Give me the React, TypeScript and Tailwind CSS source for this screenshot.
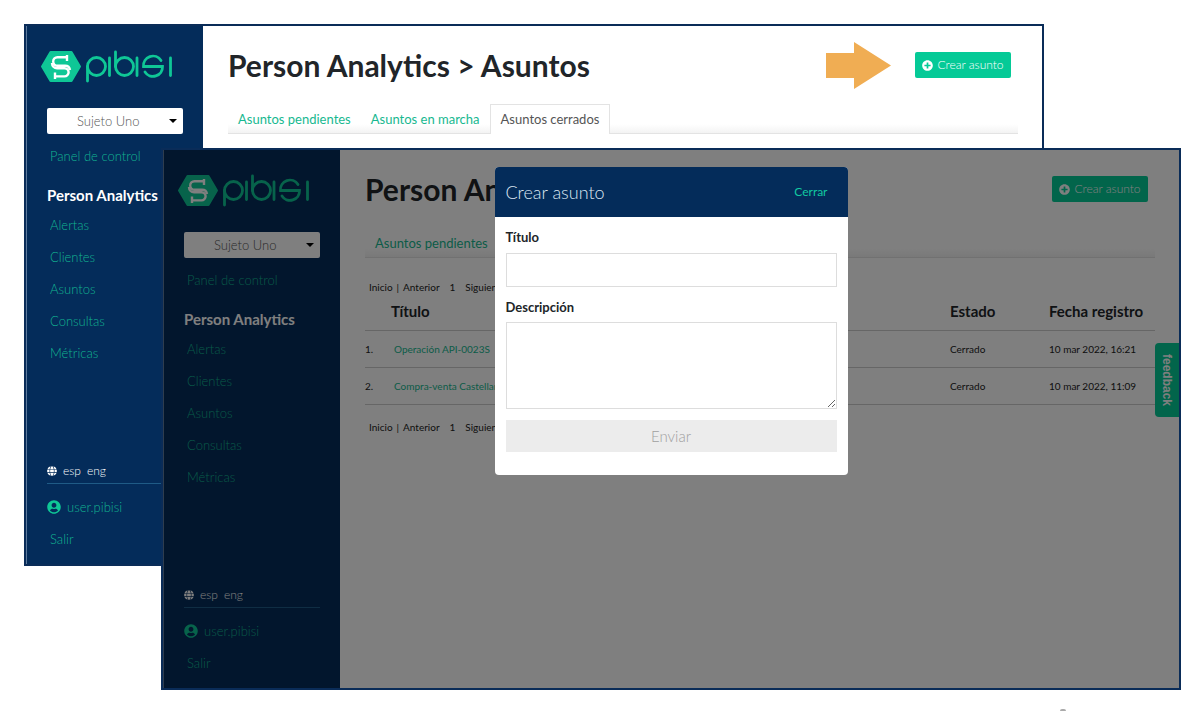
import { useId, type ReactNode } from "react";
import { FaGlobe, FaPlusCircle, FaUserCircle } from "react-icons/fa";

const sections = ["Alertas", "Clientes", "Asuntos", "Consultas", "Métricas"];
const tabs = ["Asuntos pendientes", "Asuntos en marcha", "Asuntos cerrados"];
const rows = [
  { title: "Operación API-0023S", status: "Cerrado", date: "10 mar 2022, 16:21" },
  { title: "Compra-venta Castellana", status: "Cerrado", date: "10 mar 2022, 11:09" },
];

const Logo = () => (
  <svg viewBox="0 0 134 34" className="block h-[34px] w-[134px]" fill="none" role="img" aria-label="pibisi">
    <path d="M2 17.5 10.5 3H31.5L40 17.5 31.5 32H10.5Z" fill="#0fc796" stroke="#0fc796" strokeWidth="2" strokeLinejoin="round" />
    <g stroke="#fff" strokeWidth="2.4">
      <path d="M27 6V12M27 8.2H17.5A4.3 4.3 0 0 0 17.500 16.800H25A5 5 0 0 1 30 21" />
      <path d="M12 14C12 17.500 14.500 19.200 17 19.200H24.500A4.100 4.100 0 0 1 24.500 27.400H15M15 23.500V30" />
    </g>
    <g stroke="#0fc796" strokeWidth="2.8" strokeLinecap="round">
      <circle cx="56.5" cy="17.5" r="9" />
      <path d="M47.5 17.5V32M69.5 9V26.5M75.5 3V17.5M97 9V26.5M130.5 9V26.5" />
      <circle cx="84.5" cy="17.5" r="9" />
      <path d="M121 11.5A9.5 9.5 0 0 0 103.5 17.5H122.5A9.5 9.5 0 0 1 105 23" />
    </g>
  </svg>
);

function Sidebar() {
  const id = useId();
  return (
    <aside className="flex w-[177px] shrink-0 flex-col border-l border-[#5d7a9c] bg-[#042c5a] pr-5 pl-5 text-[13px] leading-4 font-light text-[#12b391]">
      <a href="#inicio" className="mt-[23px] -ml-[7px]"><Logo /></a>
      <div className="relative mt-[25px]">
        <select id={id} aria-label="Sujeto" className="h-[26px] w-full appearance-none rounded-xs bg-white pl-[30px] text-[13px] text-[#555]">
          <option>Sujeto Uno</option>
        </select>
        <span className="pointer-events-none absolute top-[11px] right-[6px] border-x-4 border-t-4 border-x-transparent border-t-black" />
      </div>
      <nav className="mt-[14px] flex flex-col">
        <a href="#panel" className="pl-[3px]">Panel de control</a>
        <h2 className="mt-[23px] mb-[14px] text-[15px] leading-4 font-bold whitespace-nowrap text-white">Person Analytics</h2>
        <ul className="flex flex-col gap-4 pl-[3px]">
          {sections.map((s) => <li key={s}><a href={"#" + s}>{s}</a></li>)}
        </ul>
      </nav>
      <div className="mt-[102px] flex items-center gap-[6px] border-b border-[#1f5b86] pb-1 text-[12px] text-white">
        <FaGlobe className="h-[10px] w-[10px]" />
        <a href="#esp">esp</a>
        <a href="#eng">eng</a>
      </div>
      <a href="#user" className="mt-[15px] flex items-center gap-[6px]">
        <FaUserCircle className="h-[14px] w-[14px] text-[#0fc796]" /> user.pibisi
      </a>
      <a href="#salir" className="mt-4 mb-[17px] pl-[3px]">Salir</a>
    </aside>
  );
}

function AppWindow({ className, arrow, children, overlay }: { className: string; arrow?: boolean; children?: ReactNode; overlay?: ReactNode }) {
  return (
    <section className={"relative col-start-1 row-start-1 flex border-2 border-[#0a2c58] bg-white " + className}>
      <Sidebar />
      <main className="min-w-0 flex-1 pr-6 pl-[25px]">
        <header className="mt-[14px] flex h-[50px] items-center">
          <h1 className="text-[30px] leading-9 font-bold whitespace-nowrap text-[#212529]">Person Analytics &gt; Asuntos</h1>
          <div className="mr-[7px] ml-auto flex items-center gap-6">
            {arrow && (
              <svg viewBox="0 0 65 47" className="h-[47px] w-[65px]" fill="#f0ad53">
                <path d="M0 11H28V0L65 23.5 28 47V36H0Z" />
              </svg>
            )}
            <button className="flex h-[26px] w-24 items-center justify-center gap-1 rounded-xs bg-[#05ca97] text-[12px] font-light whitespace-nowrap text-white">
              <FaPlusCircle className="h-[11px] w-[11px]" /> Crear asunto
            </button>
          </div>
        </header>
        <nav className="mt-[14px] flex h-[30px] border-b border-[#e3e3e3] bg-linear-to-b from-white from-70% to-[#f3f3f3] text-[13px] leading-4">
          {tabs.map((t, i) => (
            <a
              key={t}
              href={"#tab" + i}
              className={i === 2 ? "-mb-px border border-b-0 border-[#e3e3e3] bg-white px-[10px] py-[6px] text-[#555]" : "px-[10px] py-[7px] text-[#17b890]"}
            >
              {t}
            </a>
          ))}
        </nav>
        {children}
      </main>
      {overlay}
    </section>
  );
}

const Pager = () => (
  <nav className="flex pl-1 text-[10px] leading-4 text-[#222]">
    <a href="#inicio">Inicio</a>
    <span className="px-1">|</span>
    <a href="#anterior">Anterior</a>
    <span className="px-[10px]">1</span>
    <a href="#siguiente">Siguiente</a>
  </nav>
);

function CreateDialog() {
  const id = useId();
  return (
    <form role="dialog" aria-label="Crear asunto" className="w-[353px] overflow-hidden rounded-sm bg-white text-[13px] leading-4 text-[#212529]">
      <header className="flex h-[50px] items-center justify-between bg-[#042c5a] pr-5 pl-[11px]">
        <h2 className="text-[18px] font-light text-[#dbe6f2]">Crear asunto</h2>
        <button type="button" className="text-[12px] text-[#12c9a0]">Cerrar</button>
      </header>
      <div className="flex flex-col px-[11px] pt-3 pb-[23px]">
        <label htmlFor={id + "t"} className="font-bold">Título</label>
        <input id={id + "t"} className="mt-2 h-[34px] border border-[#ddd] px-2" />
        <label htmlFor={id + "d"} className="mt-3 font-bold">Descripción</label>
        <textarea id={id + "d"} className="mt-[7px] h-[87px] resize border border-[#ddd] px-2" />
        <button type="button" disabled className="mt-[11px] h-8 bg-[#ececec] text-[15px] font-light text-[#a0a0a0]">Enviar</button>
      </div>
    </form>
  );
}

export default function App() {
  return (
    <div className="overflow-hidden bg-white font-['Lato',sans-serif]">
      <div className="grid pt-6 pr-[19px] pl-6">
        <AppWindow arrow className="mr-[137px] mb-[124px]" />
        <AppWindow
          className="mt-[124px] ml-[137px]"
          overlay={
            <>
              <button className="absolute top-[193px] right-0 h-[74px] w-6 rounded-l-sm bg-[#05ca97] font-['Liberation_Sans',sans-serif] text-[12px] font-bold text-white [writing-mode:vertical-rl]">feedback</button>
              <div className="absolute inset-0 flex items-start justify-center bg-black/50 pt-[17px]"><CreateDialog /></div>
            </>
          }
        >
          <div className="mt-[21px]"><Pager /></div>
          <table className="mt-1 mb-[14px] w-full table-fixed text-left text-[10px] leading-4 text-[#222]">
            <thead>
              <tr className="h-[31px] border-b border-[#ccc] align-top text-[15px] text-[#212529]">
                <th className="w-[26px]" aria-label="Número" />
                <th className="pt-1">Título</th>
                <th className="w-[99px] pt-1">Estado</th>
                <th className="w-[106px] pt-1 whitespace-nowrap">Fecha registro</th>
              </tr>
            </thead>
            <tbody>
              {rows.map((r, i) => (
                <tr key={r.title} className="h-[37px] border-b border-[#ccc]">
                  <td>{i + 1}.</td>
                  <td className="pl-[3px]"><a href={"#asunto" + i} className="text-[#17b890]">{r.title}</a></td>
                  <td>{r.status}</td>
                  <td className="whitespace-nowrap">{r.date}</td>
                </tr>
              ))}
            </tbody>
          </table>
          <Pager />
        </AppWindow>
      </div>
      <footer className="flex h-[21px] items-end justify-end pr-[134px]">
        <span className="h-[2px] w-[6px] rounded-t-full bg-[#aaa]" />
      </footer>
    </div>
  );
}
